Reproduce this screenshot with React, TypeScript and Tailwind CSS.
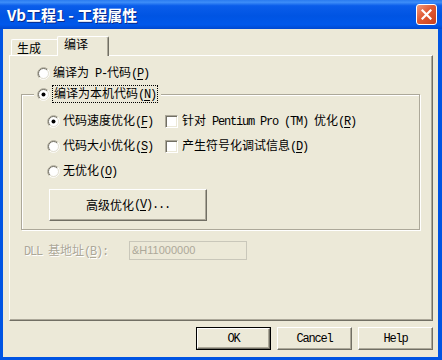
import type { ReactNode } from "react";

const LATIN = "font-['Liberation_Mono',monospace] text-[12px] tracking-[-1.2px] whitespace-pre";

function Label({ text }: { text: string }) {
  const out: ReactNode[] = [];
  text.split(/(&.)/).forEach((part, i) => {
    if (part.length === 2 && part.startsWith("&")) {
      out.push(
        <span key={i} className={`${LATIN} underline underline-offset-2`}>
          {part[1]}
        </span>
      );
      return;
    }
    part.split(/([\x00-\xff]+)/).forEach((run, j) => {
      if (!run) return;
      const latin = /^[\x00-\xff]+$/.test(run);
      out.push(
        <span key={`${i}-${j}`} className={latin ? LATIN : ""}>
          {run}
        </span>
      );
    });
  });
  return <>{out}</>;
}

function Radio({ checked }: { checked?: boolean }) {
  return (
    <svg width="13" height="13" viewBox="0 0 13 13" className="shrink-0">
      <circle cx="6.5" cy="6.5" r="5" fill="#fff" />
      <path d="M2.26 10.74 A6 6 0 0 1 10.74 2.26" stroke="#ACA899" fill="none" />
      <path d="M2.96 10.04 A5 5 0 0 1 10.04 2.96" stroke="#716F64" fill="none" />
      <path d="M10.74 2.26 A6 6 0 0 1 2.26 10.74" stroke="#fff" fill="none" />
      <path d="M10.04 2.96 A5 5 0 0 1 2.96 10.04" stroke="#E2DFD2" fill="none" />
      {checked && <circle cx="6.5" cy="6.5" r="2" fill="#000" />}
    </svg>
  );
}

function Check() {
  return (
    <div className="h-[13px] w-[13px] shrink-0 border border-t-[#ACA899] border-l-[#ACA899] border-b-white border-r-white bg-white shadow-[inset_1px_1px_0_#716F64,inset_-1px_-1px_0_#ECE9D8]" />
  );
}

function RadioRow({ text, checked }: { text: string; checked?: boolean }) {
  return (
    <div className="flex h-[16px] items-center gap-[3px]">
      <Radio checked={checked} />
      <span className="leading-[16px]">
        <Label text={text} />
      </span>
    </div>
  );
}

function CheckRow({ text }: { text: string }) {
  return (
    <div className="flex h-[16px] items-center gap-[4px]">
      <Check />
      <span className="leading-[16px]">
        <Label text={text} />
      </span>
    </div>
  );
}

const RAISED =
  "border border-t-white border-l-white border-r-[#716F64] border-b-[#716F64] shadow-[inset_-1px_-1px_0_#ACA899] bg-[#ECE9D8]";

function DialogButton({ children, def }: { children: string; def?: boolean }) {
  if (def) {
    return (
      <div className="h-[23px] w-[75px] border border-black">
        <div className={`flex h-full w-full items-center justify-center ${RAISED}`}>
          <Label text={children} />
        </div>
      </div>
    );
  }
  return (
    <div className={`flex h-[23px] w-[75px] items-center justify-center ${RAISED}`}>
      <Label text={children} />
    </div>
  );
}

export default function App() {
  return (
    <div className="flex h-[360px] w-[442px] flex-col overflow-hidden bg-[#0054E3] font-['Noto_Sans_CJK_SC','Noto_Sans',sans-serif] text-[12px] text-black">
      {/* title bar */}
      <div className="flex h-[29px] shrink-0 items-center justify-between bg-[linear-gradient(to_bottom,#2A7BF0_0%,#3D8DF8_8%,#0A5DEA_20%,#0054E3_55%,#0058EB_85%,#0048D0_100%)] pl-[7px] pr-[5px]">
        <span className="pt-[1px] text-[15px] font-bold leading-[18px] text-white [text-shadow:1px_1px_0_#0A2A8A]">
          Vb工程1 - 工程属性
        </span>
        <div className="flex h-[21px] w-[21px] items-center justify-center rounded-[3px] border border-white bg-[linear-gradient(135deg,#F29A7C_0%,#E05A34_45%,#C8401C_100%)]">
          <svg width="11" height="11" viewBox="0 0 11 11">
            <path d="M1.5 1.5 L9.5 9.5 M9.5 1.5 L1.5 9.5" stroke="#fff" strokeWidth="2.2" strokeLinecap="square" />
          </svg>
        </div>
      </div>

      {/* client area */}
      <div className="mb-[3px] ml-[3px] mr-[4px] flex flex-1 flex-col bg-[#ECE9D8] pl-[6px] pr-[5px] pt-[7px]">
        {/* tabs */}
        <div className="flex h-[19px] items-end pl-[2px]">
          <div className="flex h-[16px] w-[48px] items-center rounded-t-[2px] border-l border-t border-r border-l-white border-t-white border-r-[#716F64] pl-[5px] leading-[14px]">
            生成
          </div>
          <div className="relative z-10 -mb-[1px] -ml-[2px] flex h-[20px] w-[52px] items-start rounded-t-[2px] border-l border-t border-r border-l-white border-t-white border-r-[#716F64] bg-[#ECE9D8] pl-[6px] leading-[14px] shadow-[inset_-1px_0_0_#ACA899]">
            编译
          </div>
        </div>

        {/* panel */}
        <div className="flex h-[266px] flex-col border border-t-white border-l-white border-r-[#716F64] border-b-[#716F64] shadow-[inset_-1px_-1px_0_#ACA899]">
          <div className="ml-[27px] mt-[9px]">
            <RadioRow text="编译为 P-代码(&P)" />
          </div>

          {/* group box */}
          <div className="relative ml-[11px] mr-[12px] mt-[13px] border border-[#ACA899] pb-[8px] pl-[25px] pt-[18px] shadow-[inset_1px_1px_0_#fff,1px_1px_0_#fff]">
            <div className="absolute left-[12px] top-[-9px] flex h-[16px] items-center bg-[#ECE9D8] px-[3px]">
              <Radio checked />
              <span className="ml-[2px] border border-dotted border-black px-[1px] leading-[14px]">
                <Label text="编译为本机代码(&N)" />
              </span>
            </div>

            <div className="flex flex-col gap-[9px]">
              <div className="flex">
                <div className="w-[118px]">
                  <RadioRow text="代码速度优化(&F)" checked />
                </div>
                <CheckRow text="针对 Pentium Pro (TM) 优化(&R)" />
              </div>
              <div className="flex">
                <div className="w-[118px]">
                  <RadioRow text="代码大小优化(&S)" />
                </div>
                <CheckRow text="产生符号化调试信息(&D)" />
              </div>
              <RadioRow text="无优化(&O)" />
            </div>

            <div className={`ml-[2px] mt-[10px] flex h-[32px] w-[158px] items-center justify-center ${RAISED}`}>
              <Label text="高级优化(&V)..." />
            </div>
          </div>

          {/* DLL base address */}
          <div className="ml-[14px] mt-[11px] flex items-center">
            <span className="w-[105px] leading-[16px] text-[#ACA899] [text-shadow:1px_1px_0_#fff]">
              <Label text="DLL 基地址(&B):" />
            </span>
            <div className="flex h-[19px] w-[118px] items-center border border-[#C9C7BA] pl-[2px] font-['Liberation_Sans',sans-serif] text-[11px] text-[#ACA899]">
              &amp;H11000000
            </div>
          </div>
        </div>

        {/* dialog buttons */}
        <div className="mt-[6px] flex justify-end gap-[6px]">
          <DialogButton def>OK</DialogButton>
          <DialogButton>Cancel</DialogButton>
          <DialogButton>Help</DialogButton>
        </div>
      </div>
    </div>
  );
}
